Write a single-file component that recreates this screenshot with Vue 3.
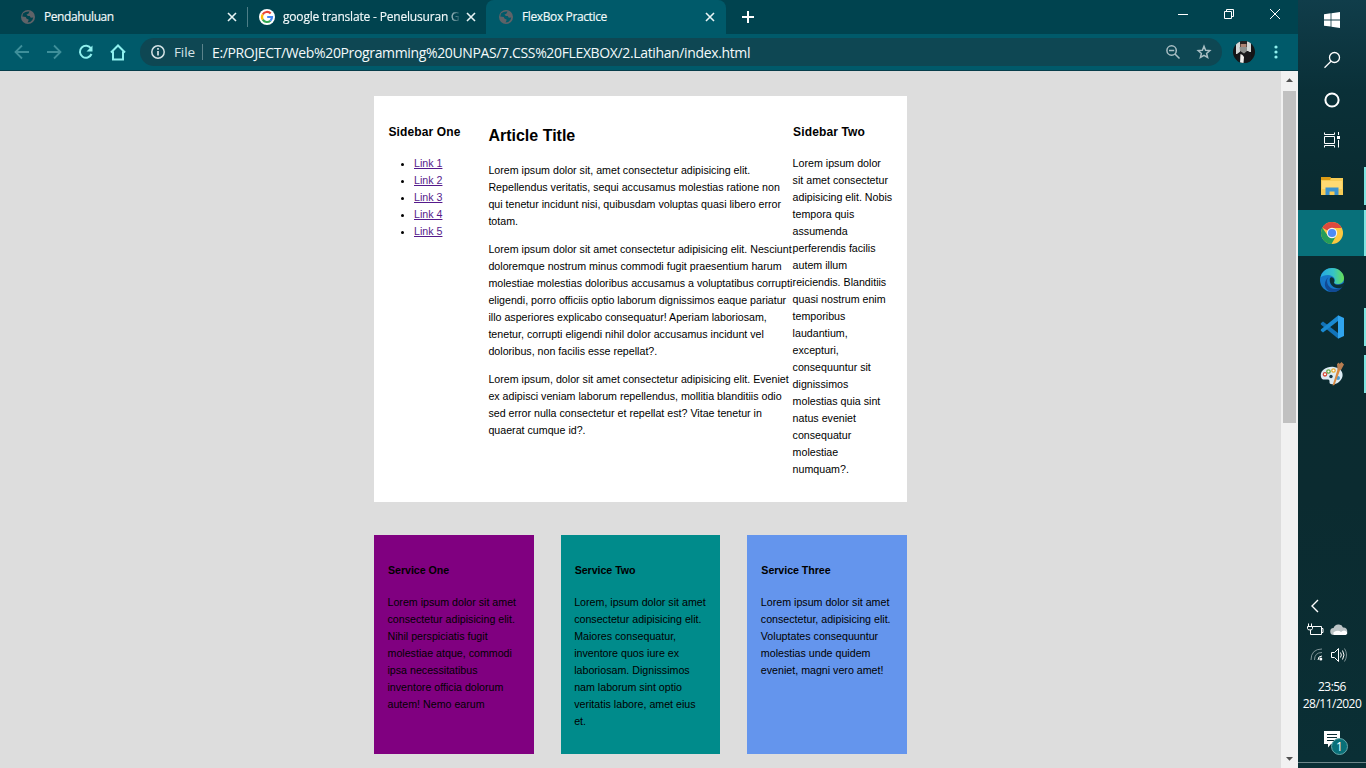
<script setup>
const links = [1, 2, 3, 4, 5]
const article = [
  ['Lorem ipsum dolor sit, amet consectetur adipisicing elit.', 'Repellendus veritatis, sequi accusamus molestias ratione non', 'qui tenetur incidunt nisi, quibusdam voluptas quasi libero error', 'totam.'],
  ['Lorem ipsum dolor sit amet consectetur adipisicing elit. Nesciunt', 'doloremque nostrum minus commodi fugit praesentium harum', 'molestiae molestias doloribus accusamus a voluptatibus corrupti', 'eligendi, porro officiis optio laborum dignissimos eaque pariatur', 'illo asperiores explicabo consequatur! Aperiam laboriosam,', 'tenetur, corrupti eligendi nihil dolor accusamus incidunt vel', 'doloribus, non facilis esse repellat?.'],
  ['Lorem ipsum, dolor sit amet consectetur adipisicing elit. Eveniet', 'ex adipisci veniam laborum repellendus, mollitia blanditiis odio', 'sed error nulla consectetur et repellat est? Vitae tenetur in', 'quaerat cumque id?.'],
]
const side = ['Lorem ipsum dolor', 'sit amet consectetur', 'adipisicing elit. Nobis', 'tempora quis', 'assumenda', 'perferendis facilis', 'autem illum', 'reiciendis. Blanditiis', 'quasi nostrum enim', 'temporibus', 'laudantium,', 'excepturi,', 'consequuntur sit', 'dignissimos', 'molestias quia sint', 'natus eveniet', 'consequatur', 'molestiae', 'numquam?.']
const services = [
  { name: 'Service One', tone: 'purple', lines: ['Lorem ipsum dolor sit amet', 'consectetur adipisicing elit.', 'Nihil perspiciatis fugit', 'molestiae atque, commodi', 'ipsa necessitatibus', 'inventore officia dolorum', 'autem! Nemo earum'] },
  { name: 'Service Two', tone: 'cyan', lines: ['Lorem, ipsum dolor sit amet', 'consectetur adipisicing elit.', 'Maiores consequatur,', 'inventore quos iure ex', 'laboriosam. Dignissimos', 'nam laborum sint optio', 'veritatis labore, amet eius', 'et.'] },
  { name: 'Service Three', tone: 'blue', lines: ['Lorem ipsum dolor sit amet', 'consectetur, adipisicing elit.', 'Voluptates consequuntur', 'molestias unde quidem', 'eveniet, magni vero amet!'] },
]
</script>

<template>
  <div class="screen">
    <div class="browser">
      <div class="tabs">
        <div class="tab t1">
          <svg class="fav" width="16" height="16" viewBox="0 0 16 16"><circle cx="8" cy="8" r="7" fill="#5f6368" /><path d="M3 4.5Q6 2 9.5 2.6L8.3 4.8 6.5 5.6 7.8 7 9.7 6.9 10.8 8.8 13.3 8.6Q13 11.4 10.2 13L7.6 13.4 8.8 10.8 6.4 9.6 5.8 8 2.3 7.6Z" fill="#00444f" /></svg>
          <span class="ttl">Pendahuluan</span>
          <svg class="x" width="10" height="10" viewBox="0 0 10 10"><path d="M1 1l8 8M9 1L1 9" stroke="#e8f4f5" stroke-width="1.6" /></svg>
        </div>
        <div class="sep"></div>
        <div class="tab t2">
          <svg class="fav" width="16" height="16" viewBox="0 0 16 16"><circle cx="8" cy="8" r="8" fill="#fff" /><g fill="none" stroke-width="2.2"><path d="M3.7 5.5A5 5 0 0 1 11.7 4.5" stroke="#ea4335" /><path d="M3.7 5.5A5 5 0 0 0 3.8 10.7" stroke="#fbbc05" /><path d="M3.8 10.7A5 5 0 0 0 11.4 11.7" stroke="#34a853" /><path d="M11.4 11.7A5 5 0 0 0 13 8H8.2" stroke="#4285f4" /></g></svg>
          <span class="ttl fade">google translate - Penelusuran G</span>
          <svg class="x" width="10" height="10" viewBox="0 0 10 10"><path d="M1 1l8 8M9 1L1 9" stroke="#e8f4f5" stroke-width="1.6" /></svg>
        </div>
        <div class="tab t3">
          <svg class="fav" width="16" height="16" viewBox="0 0 16 16"><circle cx="8" cy="8" r="7" fill="#5f6368" /><path d="M3 4.5Q6 2 9.5 2.6L8.3 4.8 6.5 5.6 7.8 7 9.7 6.9 10.8 8.8 13.3 8.6Q13 11.4 10.2 13L7.6 13.4 8.8 10.8 6.4 9.6 5.8 8 2.3 7.6Z" fill="#005a6a" /></svg>
          <span class="ttl">FlexBox Practice</span>
          <svg class="x" width="10" height="10" viewBox="0 0 10 10"><path d="M1 1l8 8M9 1L1 9" stroke="#e8f4f5" stroke-width="1.6" /></svg>
        </div>
        <svg class="plus" width="14" height="14" viewBox="0 0 14 14"><path d="M7 1v12M1 7h12" stroke="#fff" stroke-width="2" /></svg>
        <svg class="winctl" width="106" height="14" viewBox="0 0 106 14" fill="none" stroke="#fff"><path d="M1 7.500h10M47.500 4.500h7v7h-7zM49.500 4.500v-2h7v7h-2M93 2l10 10M103 2L93 12" /></svg>
      </div>
      <div class="toolbar">
        <svg class="nav" width="116" height="20" viewBox="0 0 116 20" fill="none" stroke-width="2">
          <path d="M17 10H4M10 3.500L3.500 10l6.500 6.500M35 10h13M42 3.500l6.500 6.500-6.500 6.500" stroke="#3e8f9a" stroke-width="1.800" />
          <path d="M79 6.500A6 6 0 1 0 79.500 12" stroke="#8ff0ee" /><path d="M80.500 3.500v6h-6z" fill="#8ff0ee" />
          <path d="M99 10.500L106 3.500l7 7M101 9.500v8h10v-8" stroke="#8ff0ee" />
        </svg>
        <div class="omni">
          <svg width="16" height="16" viewBox="0 0 16 16"><circle cx="8" cy="8" r="6.200" fill="none" stroke="#d5e2e5" stroke-width="1.500" /><path d="M8 7v4.500M8 4v1.700" stroke="#d5e2e5" stroke-width="1.700" /></svg>
          <span class="file">File</span><i></i>
          <span class="url">E:/PROJECT/Web%20Programming%20UNPAS/7.CSS%20FLEXBOX/2.Latihan/index.html</span>
          <svg class="oicons" width="50" height="18" viewBox="0 0 50 18" fill="none" stroke="#a9bfc4" stroke-width="1.500"><circle cx="7.600" cy="7.500" r="4.700" /><path d="M11 11l4.500 4.500M5 7.500h5.200" /><path d="M40 3.300l1.600 3.900 4.200.4-3.200 2.800 1 4.100-3.600-2.200-3.600 2.200 1-4.100-3.200-2.800 4.200-.4z" /></svg>
        </div>
        <svg class="avatar" width="22" height="22" viewBox="0 0 22 22"><defs><clipPath id="av"><circle cx="11" cy="11" r="11" /></clipPath></defs><g clip-path="url(#av)"><path fill="#151416" d="M0 0h22v22H0z" /><path fill="#d4d8d7" d="M3 0h4v13H3zM14 0h4v11h-4z" /><path fill="#17181b" d="M4 13l4-3h7l3 2v10H4z" /><path fill="#ad8373" d="M7.500 2h6v7h-6z" /><path fill="#272121" d="M7 0h7v3H7z" /><path fill="#8e918f" d="M6.500 6h7.500v4l-3 2.500L7 10z" /><path fill="#f1f1ef" d="M7.500 13l2 1 1.500 2-.5 6H7z" /></g></svg>
        <svg class="dots" width="4" height="14" viewBox="0 0 4 14" fill="#8ff0ee"><circle cx="2" cy="2" r="1.600" /><circle cx="2" cy="7" r="1.600" /><circle cx="2" cy="12" r="1.600" /></svg>
      </div>
      <div class="view">
        <div class="page">
          <main class="card">
            <aside>
              <h3>Sidebar One</h3>
              <ul><li v-for="n in links" :key="n"><a>Link {{ n }}</a></li></ul>
            </aside>
            <article>
              <h2>Article Title</h2>
              <p v-for="(para, i) in article" :key="i"><span v-for="l in para" :key="l">{{ l }}</span></p>
            </article>
            <aside>
              <h3>Sidebar Two</h3>
              <p><span v-for="l in side" :key="l">{{ l }}</span></p>
            </aside>
          </main>
          <section class="services">
            <div v-for="s in services" :key="s.name" class="service" :class="s.tone">
              <h4>{{ s.name }}</h4>
              <p><span v-for="l in s.lines" :key="l">{{ l }}</span></p>
            </div>
          </section>
        </div>
        <div class="scroll">
          <svg width="17" height="20" viewBox="0 0 17 20"><path d="M5 11l3.500-3.800L12 11z" fill="#505050" /></svg>
          <div class="thumb"></div>
          <svg width="17" height="17" viewBox="0 0 17 17"><path d="M5 6l3.500 3.800L12 6z" fill="#505050" /></svg>
        </div>
      </div>
    </div>

    <div class="taskbar">
      <div class="cell"><svg width="16" height="16" viewBox="0 0 16 16" fill="#fff"><path d="M0 2.200L6.600 1.300V7.500H0zM7.400 1.200L16 0v7.500H7.400zM0 8.400h6.600v6.200L0 13.700zM7.400 8.400H16V16l-8.600-1.200z" /></svg></div>
      <div class="cell"><svg width="18" height="18" viewBox="0 0 18 18" fill="none" stroke="#fff" stroke-width="1.300"><circle cx="11.500" cy="6.500" r="5" /><path d="M8 10.200L1.500 16.700" /></svg></div>
      <div class="cell"><svg width="16" height="16" viewBox="0 0 16 16"><circle cx="8" cy="8" r="6.600" fill="none" stroke="#fff" stroke-width="2" /></svg></div>
      <div class="cell"><svg width="16" height="16" viewBox="0 0 16 16" fill="none" stroke="#fff"><path d="M.500.500v2h10v-2M.500 15.500v-2h10v2M.500 4.500h10v7H.500zM14.500 0v3M14.500 8v7.500" /><path fill="#fff" stroke="none" d="M13 4h3v3h-3z" /></svg></div>
      <div class="app run"><svg width="24" height="24" viewBox="0 0 24 24"><path d="M1 3h9l1 1h12v17H1z" fill="#f7cc56" /><path d="M1 3h9l1 1.300-1 1.700H1z" fill="#dc9b15" /><path d="M2 7h20v8H2z" fill="#ffda73" /><path d="M5.500 21v-7.500h13V21h-4v-3.500h-5V21z" fill="#3b93d0" /></svg></div>
      <div class="app run active"><svg width="24" height="24" viewBox="0 0 24 24"><circle cx="12" cy="12" r="11" fill="#fbc840" /><path d="M12 12L2.300 6.800A11 11 0 0 1 21.800 7H12z" fill="#dc493d" /><path d="M2.300 6.800A11 11 0 0 0 11.500 23L16.300 14.500 12 17 7.700 14.500z" fill="#249d5a" /><circle cx="12" cy="12" r="5.200" fill="#f5f5f5" /><circle cx="12" cy="12" r="4.100" fill="#4c8bf5" /></svg></div>
      <div class="app"><svg width="24" height="24" viewBox="0 0 24 24"><defs><linearGradient id="eg"><stop offset="0" stop-color="#25a8e4" /><stop offset=".55" stop-color="#36c3c6" /><stop offset="1" stop-color="#67df53" /></linearGradient></defs><circle cx="12" cy="12" r="12" fill="#1676c8" /><path d="M.500 9.500C2 3 7 0 12 0c7 0 12 5 12 10 0 4-3 6-6.500 6-3 0-4-1.200-3-2.500C16 11 13 7 8 7c-3.500 0-6 1-7.500 2.500z" fill="url(#eg)" /><path d="M8.500 9C5 13 8 21 15 21c3 0 5-.8 7.500-2C19 24 14 24.500 11 24 5 22.500 2 15 8.500 9z" fill="#114a94" /><path d="M10 10c2-2 5 1 4.300 3.500-1 2 1 3.500 4 3.300 2 0 4-.8 5.700-2V18l-1.500 1c-6 4-14.500-2-12.500-9z" fill="#0c2f36" /></svg></div>
      <div class="app run"><svg width="24" height="24" viewBox="0 0 24 24"><path d="M.800 8.200L3 6.400 18 18v5.500L.800 9.500z" fill="#1273b8" /><path d="M.800 15.800L3 17.600 18 6V.500L.800 14.500z" fill="#1a8ad2" /><path d="M18 .300l6 2.700v18l-6 2.700z" fill="#30a4ee" /></svg></div>
      <div class="app run"><svg width="24" height="24" viewBox="0 0 24 24"><path d="M1 15C-.5 9 6 4 14 5c7 1 10 6 8 11-2 4-6 7-11 6-3-.6 0-4-3-4.500S2 19 1 15z" fill="#dcebf3" /><g fill="#fff" stroke-width="1.300"><circle cx="5" cy="12.300" r="1.700" stroke="#d64f3f" /><circle cx="8.500" cy="9.500" r="1.700" stroke="#67a844" /><circle cx="13.500" cy="8.500" r="1.700" stroke="#e6a92e" /></g><circle cx="11" cy="14.500" r="1.700" fill="#17394a" /><circle cx="18" cy="16" r="2" fill="#4a9cd4" /><path d="M12.500 23.500L18 6l2.500 1L14.500 23z" fill="#d98942" /><path d="M17.500 7.500L17 2l2-1.500.5 1.500 2-2L24 2.500 21 8z" fill="#b87d50" /></svg></div>
      <div class="space"></div>
      <svg class="tray" width="68" height="76" viewBox="0 0 68 76" fill="none" stroke="#fff">
        <path d="M20 7l-6 6 6 6" stroke-width="1.400" />
        <path d="M14.500 33.500h9v8h-11v-3M23.500 35.500h1.500v4h-1.500M9.500 33.500h5v2q0 1.500-2.500 1.500t-2.500-1.500zM10.500 33v-2.500M13.500 33v-2.500M12.500 37v4" />
        <path d="M36 42a3.500 3.500 0 0 1-.5-7q1.500-4 5.500-3.500 3 .2 4 3 4-.3 4.300 3.800Q49 42 46 42z" fill="#bcc4c6" stroke="none" /><path d="M36 42q-2-3 2-4 3-1 5 1 3-3 6 0 1 2-1.500 3z" fill="#fff" stroke="none" />
        <g stroke="#7e9296"><path d="M13 67q0-11 11-11M16.500 67q0-7.500 7.500-7.500" /></g><path d="M20 67q0-4 4-4" /><circle cx="22.800" cy="66" r="1.500" fill="#fff" stroke="none" />
        <path d="M33.500 59.500h3l4-4v13l-4-4h-3zM42.500 59.500q1.700 2.500 0 5M44.500 57.500q3 4.500 0 9" /><path d="M46.500 55.500q4 6.500 0 13" stroke="#7e9296" />
      </svg>
      <div class="clock"><div>23:56</div><div class="date">28/11/2020</div></div>
      <div class="note">
        <svg width="18" height="17" viewBox="0 0 18 17"><path d="M0 0h16v13H7l-3 3.500V13H0z" fill="#fff" /><path d="M3 3.500h10M3 6.500h10M3 9.500h7" stroke="#0a2c33" /></svg>
        <b>1</b>
      </div>
    </div>
  </div>
</template>

<style>
html, body { margin: 0; overflow: hidden; }
</style>
<style scoped>
* { box-sizing: border-box; }
svg { display: block; flex: none; }
.screen { width: 1366px; height: 768px; display: flex; overflow: hidden; font-family: "Open Sans", "Noto Sans", sans-serif; background: #ddd; }
.browser { width: 1298px; display: flex; flex-direction: column; }
.tabs { height: 34px; background: #00434f; display: flex; align-items: center; color: #f2fafb; font-size: 12px; }
.tab { height: 34px; display: flex; align-items: center; }
.t1 { width: 247px; padding: 0 10px 0 20px; }
.t2 { width: 238px; padding: 0 10px 0 11px; }
.t3 { width: 240px; padding: 0 11px 0 12px; background: #005a6a; border-radius: 8px 8px 0 0; }
.sep { width: 1px; height: 20px; background: #4d7e87; }
.ttl { margin-left: 8px; flex: 1; white-space: nowrap; letter-spacing: -.43px; line-height: 18px; margin-bottom: 1px; -webkit-text-stroke: .15px; }
.fade { -webkit-mask-image: linear-gradient(90deg, #000 164px, transparent 178px); mask-image: linear-gradient(90deg, #000 164px, transparent 178px); letter-spacing: -.18px; }
.t3 .ttl { letter-spacing: -.38px; }
.plus { margin-left: 15px; }
.winctl { margin-left: auto; margin-right: 15px; margin-bottom: 6px; }
.toolbar { height: 37px; background: #005a6a; border-bottom: 1px solid #063d4a; display: flex; align-items: center; padding-left: 12px; }
.omni { margin-left: 12px; width: 1082px; height: 28px; border-radius: 14px; background: #0e4753; display: flex; align-items: center; padding-left: 10px; color: #f4fafb; font-size: 14px; }
.file { margin-left: 8px; width: 28px; font-size: 13.500px; letter-spacing: -.1px; color: #d5e2e5; }
.omni i { width: 1px; height: 16px; background: #5b838b; }
.url { margin-left: 9px; white-space: nowrap; letter-spacing: -.360px; }
.oicons { margin-left: auto; margin-right: 8px; }
.avatar { margin-left: 11px; }
.dots { margin-left: 19px; }
.view { flex: 1; display: flex; min-height: 0; }
.page { width: 1281px; background: #ddd; padding: 25px 0 0 374px; font: 10.667px/17px "Liberation Sans", Arial, sans-serif; color: #000; }
.card { width: 533px; height: 406px; background: #fff; padding: 14px; display: flex; }
aside { width: 100.500px; }
article { width: 304.500px; }
h2, h3, h4, p, ul { margin: 0; }
p span { display: block; white-space: nowrap; }
h3 { font-size: 12px; line-height: 20px; margin: 12px 0 13px; padding-left: .5px; letter-spacing: .12px; }
h2 { font-size: 16px; line-height: 26px; margin: 13px 0 13px; }
article p { margin-bottom: 11px; }
ul { padding-left: 26px; }
a { color: #551a8b; text-decoration: underline; }
.services { display: flex; gap: 27px; width: 533px; margin-top: 33px; }
.service { flex: 1; height: 219px; padding: 14px 13.500px; }
h4 { font-size: 10.667px; line-height: 17px; margin: 13px 0 15px .5px; letter-spacing: -.05px; }
.purple { background: #800080; }
.cyan { background: #008b8b; }
.blue { background: #6495ed; }
.scroll { width: 17px; background: #f1f1f1; display: flex; flex-direction: column; justify-content: space-between; }
.thumb { width: 13px; height: 332px; margin: 0 2px auto; background: #c1c1c1; }
.taskbar { width: 68px; background: linear-gradient(#103d4a, #0a3038 90px, #0a2b30 200px, #0b2b30 500px, #0a2f35); display: flex; flex-direction: column; border-bottom: 5px solid #0a2f35; color: #fff; }
.cell { height: 40px; display: flex; align-items: center; justify-content: center; }
.app { height: 46px; margin-bottom: 1px; display: flex; align-items: center; justify-content: center; position: relative; }
.cell + .app { margin-top: 3px; }
.run::after { content: ""; position: absolute; right: 0; top: 4px; width: 2px; height: 38px; background: #7fe5e2; }
.active { background: #08707a; }
.active::after { top: 0; height: 46px; }
.space { flex: 1; }
.tray { margin-bottom: 9px; }
.clock { height: 36px; text-align: center; font-size: 12px; line-height: 17px; letter-spacing: -.55px; }
.date { letter-spacing: -.52px; }
.note { height: 49px; border-bottom: 1px solid #6e878b; padding: 17px 0 0 26px; position: relative; }
.note b { position: absolute; left: 33px; top: 24px; width: 17px; height: 17px; border-radius: 50%; background: #087078; border: 1px solid #67a6a9; font: 12px/15px "Open Sans", sans-serif; text-align: center; }
</style>
